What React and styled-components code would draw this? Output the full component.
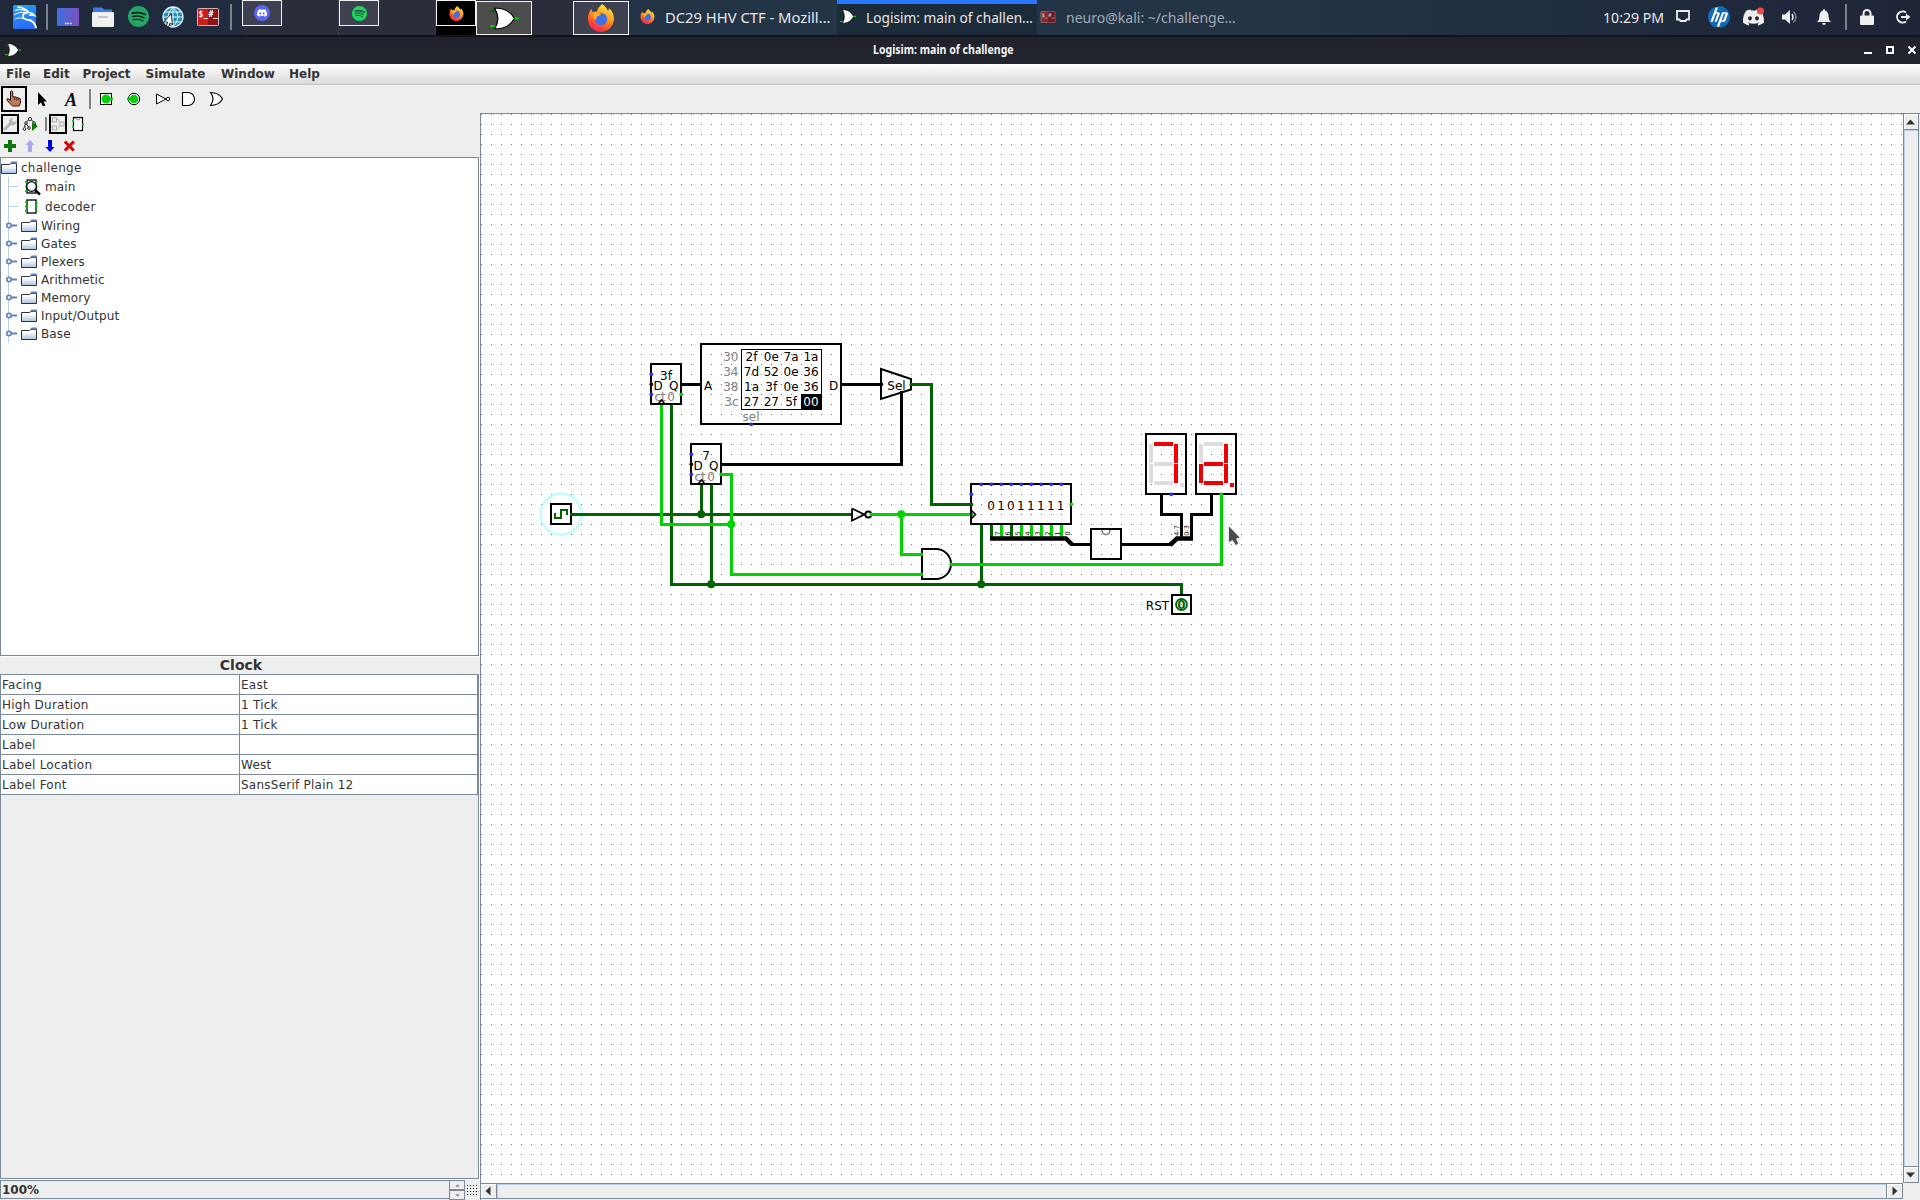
import React, { useLayoutEffect, useRef, useState } from "react";
import styled, { createGlobalStyle } from "styled-components";
import { SiKalilinux, SiSpotify, SiDiscord, SiHp } from "react-icons/si";

const Global = createGlobalStyle`
  * { box-sizing: border-box; }
  html, body { margin: 0; padding: 0; background: #eeeeee; overflow: hidden; }
  body { font-family: "DejaVu Sans", sans-serif; font-size: 12px; color: #333; }
  svg { display: block; flex: none; }
`;

const LINE = "#7a8a99";
const SHADE = "#b8cfe5";
const LOW = "#006400";
const HIGH = "#00d200";

/* ---------- text fitted to a measured width ---------- */
const FitBox = styled.span`
  display: block;
  flex: none;
  white-space: pre;
  overflow: visible;
`;
const FitInner = styled.span`
  display: inline-block;
  white-space: pre;
  transform-origin: 0 50%;
`;
function Fit({ w, children }) {
  const ref = useRef(null);
  const [k, setK] = useState(1);
  useLayoutEffect(() => {
    if (w && ref.current) setK(w / ref.current.offsetWidth);
  }, [w]);
  return (
    <FitBox style={{ width: w }}>
      <FitInner ref={ref} style={{ transform: `scaleX(${k})` }}>{children}</FitInner>
    </FitBox>
  );
}

/* ---------- layout ---------- */
const Screen = styled.div`
  width: 1920px;
  height: 1200px;
  display: flex;
  flex-direction: column;
`;
const Panel = styled.header`
  height: 35px;
  flex: none;
  display: flex;
  align-items: center;
  background: linear-gradient(90deg, #20293b 0, #212c40 240px, #243447 640px, #233447 1300px, #20273a 1800px, #1f2538 100%);
  color: #e6e8ea;
  font-family: "Noto Sans", sans-serif;
  font-size: 14.6px;
`;
const Launchers = styled.div`
  width: 242px;
  height: 35px;
  display: flex;
  align-items: center;
  padding: 0 0 1px 13px;
`;
const Slot = styled.span`
  display: flex;
  flex: none;
  width: ${(p) => p.$w}px;
  margin-right: ${(p) => p.$gap || 0}px;
`;
const Bar = styled.span`
  flex: none;
  width: 2px;
  height: 26px;
  background: #7c828b;
  margin-right: ${(p) => p.$gap || 0}px;
`;
const Pager = styled.div`
  display: flex;
  width: 388px;
  height: 35px;
  background: #2b2d3a;
`;
const Workspace = styled.div`
  display: flex;
  width: 97px;
  padding-left: ${(p) => p.$indent || 0}px;
  border-right: ${(p) => (p.$rule ? "1px solid #3c3f4b" : "none")};
  background: ${(p) => (p.$active ? "linear-gradient(90deg,#000 40px,#2b2d3a 40px)" : "none")};
`;
const MiniWindow = styled.div`
  display: flex;
  align-items: center;
  justify-content: center;
  width: ${(p) => p.$w}px;
  height: ${(p) => p.$h}px;
  margin-top: ${(p) => p.$top || 0}px;
  background: ${(p) => p.$bg || "#3d4150"};
  border: 1px solid #f2f2f2;
`;
const Task = styled.div`
  display: flex;
  align-items: center;
  width: ${(p) => p.$w}px;
  height: 35px;
  padding: 0 0 2px ${(p) => p.$pad}px;
  gap: 10px;
  background: ${(p) => (p.$active ? "#1c2b39" : "transparent")};
  box-shadow: ${(p) => (p.$active ? "inset 0 4px 0 #2777ff" : "none")};
  color: ${(p) => (p.$dim ? "#a3abb3" : "#e6e8ea")};
`;
const Tray = styled.div`
  display: flex;
  align-items: center;
  margin-left: auto;
  width: 317px;
  height: 35px;
  padding-bottom: 2px;
`;
const TitleBar = styled.div`
  height: 29px;
  flex: none;
  display: grid;
  grid-template-columns: 60px 1fr 60px;
  align-items: center;
  padding-bottom: 2px;
  border-top: 2px solid #12141b;
  background: linear-gradient(#20222b, #23252e);
  color: #f4f4f4;
  font: bold 12.5px "Noto Sans", sans-serif;
`;
const TitleText = styled.div`
  display: flex;
  justify-content: center;
  padding-right: 33px;
  height: 18px;
  line-height: 17px;
`;
const MenuBar = styled.nav`
  height: 21px;
  flex: none;
  display: flex;
  align-items: center;
  padding-left: 6px;
  background: linear-gradient(#fff, #dadada);
  border-bottom: 1px solid #c4c4c4;
  font-weight: bold;
`;
const MenuItem = styled.span`
  width: ${(p) => p.$w}px;
  line-height: 18px;
`;
const Tools = styled.div`
  height: 28px;
  flex: none;
  display: flex;
  align-items: center;
  padding: 0 0 1px 1px;
`;
const ToolButton = styled.span`
  display: flex;
  align-items: center;
  justify-content: center;
  flex: none;
  width: ${(p) => p.$w}px;
  height: ${(p) => p.$h}px;
  border: 2px solid ${(p) => (p.$on ? "#000" : "transparent")};
`;
const ToolA = styled.text`
  font: italic bold 18px "Liberation Serif", serif;
  fill: #111;
`;
const Work = styled.main`
  flex: 1;
  min-height: 0;
  display: grid;
  grid-template-columns: 480px 1440px;
`;
const Side = styled.aside`
  display: flex;
  flex-direction: column;
  min-height: 0;
`;
const SmallTools = styled.div`
  display: flex;
  align-items: center;
  flex: none;
  height: ${(p) => p.$h}px;
  padding: ${(p) => p.$pad};
  gap: ${(p) => p.$gap || 0}px;
`;
const Frame = styled.div`
  width: 479px;
  flex: none;
  height: ${(p) => p.$h}px;
  border: 1px solid ${LINE};
  background: ${(p) => p.$bg || "#fff"};
  box-shadow: 1px 1px 0 #fff;
`;
const TreeRow = styled.div`
  display: flex;
  align-items: center;
  height: ${(p) => p.$h}px;
  letter-spacing: ${(p) => p.$track || 0.12}px;
`;
const TreeLabel = styled.span`
  padding-left: ${(p) => p.$pad}px;
`;
const PropTitle = styled.h2`
  margin: 0;
  flex: none;
  height: 18px;
  line-height: 18px;
  text-align: center;
  padding-left: 2px;
  font-size: 14px;
  font-weight: bold;
`;
const PropRow = styled.div`
  display: grid;
  grid-template-columns: 239px 238px;
  height: 20px;
  background: #fff;
  width: 477px;
`;
const PropCell = styled.span`
  border-right: 1px solid ${LINE};
  border-bottom: 1px solid ${LINE};
  padding-left: 1px;
  line-height: 20px;
  height: 20px;
  letter-spacing: 0.24px;
`;
const ZoomRow = styled.div`
  display: flex;
  flex: none;
  height: 20px;
  margin-top: 1px;
`;
const ZoomField = styled.div`
  width: 449px;
  height: 19px;
  border: 1px solid ${LINE};
  border-right: none;
  padding-left: 1px;
  line-height: 19px;
  font-weight: bold;
`;
const Spinner = styled.div`
  display: flex;
  flex-direction: column;
  width: 16px;
  height: 20px;
`;
const SpinButton = styled.span`
  display: flex;
  align-items: center;
  justify-content: center;
  flex: 1;
  border: 1px solid ${LINE};
`;
const GridIconBox = styled.span`
  padding: 5px 0 0 2px;
`;
const CanvasFrame = styled.section`
  display: grid;
  grid-template-columns: 1422px 16px;
  grid-template-rows: 1069px 16px;
  border-left: 1px solid ${LINE};
  border-top: 1px solid ${LINE};
`;
const Track = styled.div`
  display: flex;
  flex-direction: ${(p) => (p.$v ? "column" : "row")};
  width: ${(p) => (p.$v ? "16px" : "auto")};
  height: ${(p) => (p.$v ? "auto" : "16px")};
  border: 1px solid ${LINE};
  ${(p) => (p.$v ? "border-top: none;" : "border-left: none;")}
`;
const ArrowButton = styled.span`
  display: flex;
  align-items: center;
  justify-content: center;
  width: ${(p) => (p.$v ? "14px" : "15px")};
  height: ${(p) => (p.$v ? "15px" : "14px")};
  flex: none;
  box-shadow: inset 1px 1px 0 #fff;
`;
const Thumb = styled.span`
  flex: 1;
  border: 0 solid ${LINE};
  border-width: ${(p) => (p.$v ? "1px 0" : "0 1px")};
  box-shadow: inset 1px 1px 0 ${SHADE};
`;

/* ---------- icons ---------- */
const GateIcon = ({ w, h }) => (
  <svg width={w} height={h} viewBox="0 0 16 16" preserveAspectRatio="none">
    <path d="M0 2.700h3.500" stroke={LOW} strokeWidth="1.300" />
    <path d="M0 13.300h3.500" stroke={HIGH} strokeWidth="1.300" />
    <path d="M2.500 .8H4.500Q10.500 1.500 13.500 8Q10.500 14.500 4.500 15.200H2.500Q6.200 8 2.500 .8Z" fill="#fff" stroke="#000" strokeWidth=".7" />
    <path d="M13.500 8h2.500" stroke={HIGH} strokeWidth="1.500" />
  </svg>
);
const Firefox = ({ s }) => (
  <svg width={s} height={s} viewBox="0 0 24 24">
    <defs>
      <linearGradient id="fx" x1=".8" y1="0" x2=".3" y2="1">
        <stop offset="0" stopColor="#fff04a" />
        <stop offset=".45" stopColor="#ff9a1f" />
        <stop offset=".8" stopColor="#ff4430" />
        <stop offset="1" stopColor="#e8246e" />
      </linearGradient>
    </defs>
    <path fill="url(#fx)" d="M13 0c3 2 4 4 5 6c1-1 .6-2 .6-2.500C22 6 23.500 10 23 14c-1 6-5.500 10-11 10S1 19.500.8 13C.7 9 2 6 4 4c0 1 .3 2 1 3c1-.6 2.500-.8 3.500-.3C8.800 4 11 2 13 0Z" />
    <circle cx="12" cy="13" r="5.300" fill="#3f6fe8" />
    <path fill="#ffb02a" d="M5 8c3-1.500 5-.5 7 1c-1 1-2 1-3 1.500c-1 .8-1.500 2-1 3.500c-2-1-3-3-3-6Z" />
  </svg>
);
const Folder = () => (
  <svg width="16" height="14" viewBox="0 0 16 14">
    <defs>
      <linearGradient id="fold" x1="0" y1="0" x2="0" y2="1">
        <stop offset=".25" stopColor="#fff" />
        <stop offset="1" stopColor="#a9c4de" />
      </linearGradient>
    </defs>
    <path d="M.5 12.500V3.500H8.500L10 2.500H15.500V12.500Z" fill="url(#fold)" stroke="#333" />
    <path d="M9 2.200L10.500 .5H16V2.500H9Z" fill="#6382bf" />
  </svg>
);
const Handle = () => (
  <svg width="20" height="18" viewBox="0 0 20 18">
    <path d="M7.500 0v18" stroke={SHADE} />
    <circle cx="8" cy="8.500" r="2.200" fill="#fff" stroke="#6382bf" strokeWidth="1.700" />
    <path d="M10 8.500h6" stroke="#6382bf" strokeWidth="2" />
  </svg>
);
const Branch = () => (
  <svg width="24" height="20" viewBox="0 0 24 20" shapeRendering="crispEdges">
    <path d="M7.500 0v20M8 9.500h9" stroke={SHADE} fill="none" />
  </svg>
);
const Chip = ({ lens }) => (
  <svg width="17" height="18" viewBox="0 0 17 18">
    <rect x="2" y="2" width="9" height="13" fill="#fff" stroke="#000" strokeWidth="1.300" />
    <path d="M0 4h2M0 8.500h2M0 13h2M10.500 4h2M10.500 8.500h2M10.500 13h2" stroke={HIGH} strokeWidth="1.800" />
    {lens && <circle cx="6.500" cy="8.500" r="4.800" fill="#f0f0ff" fillOpacity=".95" stroke="#000" strokeWidth="1.200" />}
    {lens && <path d="M10 12l5 4.500" stroke="#000" strokeWidth="2.400" />}
  </svg>
);
const HandIcon = () => (
  <svg width="16" height="17" viewBox="0 0 16 17">
    <path d="M4.500 1.500q1.200-1.200 2.200 0v5l2 .3l2 .6l2 .6q2 .2 2 2.500q0 3-1.500 5.500H6.500Q3 13 1 10q-.3-1.500 1-1.500l2.500 2Z" fill="#c27a5c" stroke="#301810" />
    <path d="M8.700 7v3M10.800 7.500v3M12.800 8.500v2" stroke="#301810" strokeWidth=".8" />
  </svg>
);
const Launch = {
  Kali: () => (
    <svg width="24" height="24" viewBox="0 0 24 24">
      <defs><linearGradient id="kl" x1="0" y1="0" x2=".3" y2="1"><stop stopColor="#20a4f3" /><stop offset="1" stopColor="#2a6df5" /></linearGradient></defs>
      <rect width="23" height="24" rx="1.500" fill="url(#kl)" />
      <g fill="none" stroke="#fff" strokeLinecap="round">
        <path d="M2.500 5.500Q8 3 14 6.500" strokeWidth="1.300" />
        <path d="M1.500 9.500Q7 6 13.500 7.500" strokeWidth="1" />
        <path d="M5 2Q12 2.500 16 7.500Q19.500 8 21.500 10.500Q19 9.800 16.500 10.200" strokeWidth="1.600" />
        <path d="M14.500 7.500Q9 8.500 10 12Q11 14.500 16 15Q21 15.800 23 22.500" strokeWidth="1.900" />
        <path d="M10.500 13.500Q5.500 11.500 2 14" strokeWidth=".9" />
      </g>
    </svg>
  ),
  Desktop: () => (
    <svg width="22" height="18" viewBox="0 0 22 18">
      <defs><linearGradient id="dk"><stop stopColor="#3d6fe0" /><stop offset="1" stopColor="#7a52bd" /></linearGradient></defs>
      <rect width="22" height="18" rx="1" fill="url(#dk)" />
      <path d="M8 15.500h1.500M10.500 15.500h1.500M13 15.500h1.500" stroke="#fff" strokeWidth="1.400" />
    </svg>
  ),
  Files: () => (
    <svg width="22" height="20" viewBox="0 0 22 20">
      <path d="M2 .5h8l2 2h8v5H1V1.500q0-1 1-1Z" fill="#3c7be8" />
      <rect y="5" width="22" height="15" rx="1" fill="#f1f1f1" />
      <rect x="6" y="9" width="10" height="2" rx="1" fill="#c4c4c4" />
    </svg>
  ),
  Globe: () => (
    <svg width="22" height="22" viewBox="0 0 22 22">
      <circle cx="11" cy="11" r="10" fill="#2190b8" stroke="#dff1f7" strokeWidth="1.300" />
      <path d="M1 11h20M3 6h16M3 16h16M11 1v20M11 1q-10 10 0 20M11 1q10 10 0 20" stroke="#e9f6fa" fill="none" />
      <path d="M9 8L2 16l3.500 0l-1 4l2 .8l1.500-3.800l2.500 1.500Z" fill="#fff" stroke="#111" strokeWidth=".8" />
    </svg>
  ),
};
const TermText = styled.text`
  font: bold 8px "DejaVu Sans Mono", monospace;
  fill: #fff;
`;
const Terminal = ({ w, h, dim }) => (
  <svg width={w} height={h} viewBox="0 0 22 18" opacity={dim ? 0.65 : 1}>
    <rect x=".5" y=".5" width="21" height="17" rx="1" fill="#cf1b1b" stroke="#d9b3b3" />
    <rect x="11" y="1" width="10" height="16" fill="#8e1212" />
    <TermText x="1.500" y="9">$_</TermText>
    <TermText x="11.500" y="9">#_</TermText>
  </svg>
);

/* ---------- circuit ---------- */
const CText = styled.text`
  font-family: "DejaVu Sans", sans-serif;
  font-size: ${(p) => p.$s || 12}px;
  fill: ${(p) => p.$c || "#000"};
  text-anchor: ${(p) => p.$a || "middle"};
`;
const Wire = ({ d, c = "#000", w = 3 }) => (
  <path d={d} transform="translate(.5 .5)" stroke={c} strokeWidth={w} fill="none" strokeLinecap="square" shapeRendering="crispEdges" />
);
const Box = (p) => <rect {...p} fill="none" stroke="#000" strokeWidth="2" shapeRendering="crispEdges" />;
const Pin = ({ x, y, c = "#2a2aff" }) => <circle cx={x + 0.3} cy={y + 0.3} r="1.900" fill={c} />;
const Joint = ({ x, y, c }) => <circle cx={x + 0.2} cy={y + 0.2} r="4" fill={c} />;

function Register({ x, y, value }) {
  return (
    <g>
      <Box x={x} y={y} width="30" height="40" />
      <CText x={x + 15} y={y + 15.500}>{value}</CText>
      <CText x={x + 2.500} y={y + 26} $a="start">D</CText>
      <CText x={x + 27.500} y={y + 26} $a="end">Q</CText>
      <CText x={x + 3.500} y={y + 36.500} $a="start" $c="#808080">ct</CText>
      <CText x={x + 20} y={y + 36.500} $c="#808080">0</CText>
      <path d={`M${x + 7} ${y + 40}l3.500-4l3.500 4`} fill="none" stroke="#000" strokeWidth="1.600" />
      <Pin x={x} y={y + 10} />
      <Pin x={x} y={y + 30} />
      <Pin x={x} y={y + 20} c="#000" />
      <Pin x={x + 30} y={y + 30} c={HIGH} />
    </g>
  );
}

const SEGMENTS = [
  [8, 8, 19, 4], [28, 10, 4, 19], [28, 30, 4, 19], [8, 47, 19, 4],
  [3, 30, 4, 19], [3, 10, 4, 19], [8, 28, 19, 4], [34, 49, 4, 4],
];
function SevenSegment({ x, y, on }) {
  return (
    <g shapeRendering="crispEdges">
      {SEGMENTS.map(([dx, dy, w, h], i) => (
        <rect key={i} x={x + dx} y={y + dy} width={w} height={h} fill={on.includes(i) ? "#f00000" : "#dddddd"} />
      ))}
      <Box x={x} y={y} width="40" height="60" />
    </g>
  );
}

const ROM = [
  ["30", ["2f", "0e", "7a", "1a"]],
  ["34", ["7d", "52", "0e", "36"]],
  ["38", ["1a", "3f", "0e", "36"]],
  ["3c", ["27", "27", "5f", "00"]],
];
const BITS = [0, 1, 0, 1, 1, 1, 1, 1];

function Circuit() {
  return (
    <svg width="1422" height="1069" viewBox="481 114 1422 1069">
      <defs>
        <pattern id="grid" x="481" y="114" width="10" height="10" patternUnits="userSpaceOnUse">
          <rect width="1" height="1" fill="#777" shapeRendering="crispEdges" />
        </pattern>
      </defs>
      <rect x="481" y="114" width="1422" height="1069" fill="#fff" />
      <rect x="481" y="114" width="1422" height="1069" fill="url(#grid)" />

      <Wire d="M682 384H700M842 384H880M722 464H901V392" />
      <Wire d="M1161 496V514H1181V538M1211 496V514H1191V538M1122 544H1170M1072 544H1090" />
      <Wire c={LOW} d="M911 384H931V504H971M571 514H851M701 485V514M711 485V584M671 405V584H1181V593M981 525V584" />
      <Wire c={HIGH} d="M871 514H971M901 514V554H921M721 474H731V574H921M661 405V524H731M952 564H1221V495" />
      {BITS.map((b, i) => (
        <Wire key={i} c={b ? HIGH : LOW} d={`M${991 + i * 10} 526V535`} />
      ))}
      <Joint x={701} y={514} c={LOW} />
      <Joint x={711} y={584} c={LOW} />
      <Joint x={981} y={584} c={LOW} />
      <Joint x={731} y={524} c={HIGH} />
      <Joint x={901} y={514} c={HIGH} />

      <circle cx="561" cy="514.300" r="20.500" fill="none" stroke="#c0ffff" strokeWidth="2.400" />
      <Box x="551" y="504" width="20" height="20" />
      <path d="M555 513v5h6v-8h6v5" fill="none" stroke={LOW} strokeWidth="2" shapeRendering="crispEdges" />
      <Wire c={LOW} d="M571 514H585" />

      <Register x={651} y={364} value="3f" />
      <Register x={691} y={444} value="7" />

      <Box x="701" y="344" width="140" height="80" />
      <rect x="741.500" y="349.500" width="80" height="60" fill="none" stroke="#000" shapeRendering="crispEdges" />
      <rect x="801" y="394" width="21" height="16" />
      {ROM.map(([addr, cells], r) => (
        <g key={addr}>
          <CText x="738.500" y={361 + r * 15.100} $a="end" $c="#808080">{addr}</CText>
          {cells.map((v, c) => (
            <CText key={c} x={751.500 + c * 19.800} y={361 + r * 15.100} $c={r === 3 && c === 3 ? "#fff" : "#000"}>{v}</CText>
          ))}
        </g>
      ))}
      <CText x="751" y="420.500" $c="#808080">sel</CText>
      <CText x="708" y="389.500">A</CText>
      <CText x="833.500" y="389.500">D</CText>
      <Pin x={751} y={424} />

      <path d="M881 369L911 379V389.500L881 399Z" fill="none" stroke="#000" strokeWidth="2" />
      <CText x="896.500" y="390">Sel</CText>
      <Pin x={881} y={384} c="#000" />
      <Pin x={911} y={384} c={LOW} />

      <path d="M852 508.500V520.500L866 513.800M852 508.500L866 515.200" fill="none" stroke="#000" strokeWidth="1.800" />
      <circle cx="868.300" cy="514.500" r="3" fill="none" stroke="#000" strokeWidth="1.800" />
      <Pin x={871} y={514} c={HIGH} />

      <path d="M922 549V579H936A15 15 0 0 0 936 549Z" fill="none" stroke="#000" strokeWidth="2" />
      <Pin x={921} y={554} c={HIGH} />
      <Pin x={921} y={574} c={HIGH} />
      <Pin x={951} y={564} c={HIGH} />

      <Box x="971" y="484" width="100" height="40" />
      {BITS.map((b, i) => (
        <g key={i}>
          <CText x={991 + i * 9.950} y="509.500">{b}</CText>
          <Pin x={991 + i * 10} y={484} />
          <CText $s="6.5" transform={`translate(${999.500 + i * 10} 533.500) rotate(-90)`}>{7 - i}</CText>
        </g>
      ))}
      <Pin x={981} y={484} />
      <Pin x={971} y={494} />
      <Pin x={971} y={504} c={LOW} />
      <Pin x={1071} y={504} c={HIGH} />
      <path d="M971 510l4.500 4.500l-4.500 4.500" fill="none" stroke="#000" strokeWidth="1.600" />
      <path d="M990 538.500H1066L1072 544.500" fill="none" stroke="#000" strokeWidth="4.500" />

      <Box x="1091" y="529" width="30" height="30" />
      <path d="M1102 530a4 4.500 0 0 0 8 0" fill="none" stroke="#808080" strokeWidth="1.600" />

      <SevenSegment x={1146} y={434} on={[0, 1, 2]} />
      <SevenSegment x={1196} y={434} on={[1, 2, 3, 4, 6, 7]} />
      <Pin x={1171} y={494} />
      <Pin x={1221} y={494} c={HIGH} />
      <path d="M1170 545L1177 538.500H1193" fill="none" stroke="#000" strokeWidth="4.500" />
      <CText $s="6.5" transform="translate(1179 530.500) rotate(-90)">4-7</CText>
      <CText $s="6.5" transform="translate(1189 530.500) rotate(-90)">0-3</CText>

      <CText x="1157.500" y="610">RST</CText>
      <Box x="1172" y="595" width="19" height="19" />
      <circle cx="1181.500" cy="604.500" r="5.500" fill="none" stroke={LOW} strokeWidth="1.800" />
      <CText x="1181.500" y="609" fontWeight="bold" $c={LOW}>0</CText>

      <path d="M1229 526.500V542L1232.500 540L1236 545L1238 543.500L1236 538.500L1239.500 537.500Z" fill="#4d4d4d" stroke="#ededed" strokeWidth="3" paintOrder="stroke" />
    </svg>
  );
}

const MENUS = [["File", 37], ["Edit", 39.5], ["Project", 63], ["Simulate", 75.5], ["Window", 68], ["Help", 60]];
const FOLDERS = ["Wiring", "Gates", "Plexers", "Arithmetic", "Memory", "Input/Output", "Base"];
const PROPS = [
  ["Facing", "East"], ["High Duration", "1 Tick"], ["Low Duration", "1 Tick"],
  ["Label", ""], ["Label Location", "West"], ["Label Font", "SansSerif Plain 12"],
];
const Arrow = ({ r, s = 10, c = "#333", dx = 0 }) => (
  <svg width={s} height={s} viewBox={`${-dx} 0 10 10`}><path d="M5 2.500L9.500 7.500H.5Z" fill={c} transform={`rotate(${r} 5 5)`} /></svg>
);

export default function App() {
  return (
    <Screen>
      <Global />
      <Panel>
        <Launchers>
          <Slot $w={24} $gap={9}><Launch.Kali /></Slot>
          <Bar $gap={9} />
          <Slot $w={22} $gap={13}><Launch.Desktop /></Slot>
          <Slot $w={22} $gap={14}><Launch.Files /></Slot>
          <Slot $w={22} $gap={12}>
            <svg width="22" height="22" viewBox="0 0 22 22"><circle cx="11" cy="11" r="9" fill="#14261d" /><SiSpotify size={21} color="#27a567" /></svg>
          </Slot>
          <Slot $w={22} $gap={13}><Launch.Globe /></Slot>
          <Slot $w={22} $gap={11}><Terminal w={22} h={18} /></Slot>
          <Bar />
        </Launchers>
        <Pager>
          <Workspace $rule>
            <MiniWindow $w={40} $h={26}>
              <svg width="16" height="16" viewBox="0 0 16 16"><circle cx="8" cy="8" r="8" fill="#5865f2" /><SiDiscord x="3" y="3" size={10} color="#fff" /></svg>
            </MiniWindow>
          </Workspace>
          <Workspace $rule>
            <MiniWindow $w={40} $h={26}><SiSpotify size={15} color="#1ed760" /></MiniWindow>
          </Workspace>
          <Workspace $active>
            <MiniWindow $w={40} $h={26} $bg="#000"><Firefox s={15} /></MiniWindow>
            <MiniWindow $w={56} $h={34} $top={1} $bg="#4d4d4d"><GateIcon w={29} h={23} /></MiniWindow>
          </Workspace>
          <Workspace $indent={40}>
            <MiniWindow $w={56} $h={34} $top={1}><Firefox s={28} /></MiniWindow>
          </Workspace>
        </Pager>
        <Task $w={207} $pad={10}><Firefox s={15} /><Fit w={165}>DC29 HHV CTF - Mozill…</Fit></Task>
        <Task $w={200} $pad={3} $active><GateIcon w={16} h={15} /><Fit w={167}>Logisim: main of challen…</Fit></Task>
        <Task $w={210} $pad={3} $dim><Terminal w={16} h={12} dim /><Fit w={170}>neuro@kali: ~/challenge…</Fit></Task>
        <Tray>
          <Slot $w={61} $gap={12}><Fit w={61}>10:29 PM</Fit></Slot>
          <Slot $w={14} $gap={18}>
            <svg width="14" height="13" viewBox="0 0 14 13"><path d="M1 1h12v8.500h-2.500l-1 1.500H4.500l-1-1.500H1Z" fill="none" stroke="#eee" strokeWidth="1.800" /></svg>
          </Slot>
          <Slot $w={22} $gap={13}>
            <svg width="22" height="22" viewBox="0 0 22 22"><circle cx="11" cy="11" r="10" fill="#fff" /><SiHp size={22} color="#0f6cb5" /></svg>
          </Slot>
          <Slot $w={22} $gap={17}>
            <svg width="22" height="20" viewBox="0 0 22 20"><SiDiscord size={21} color="#eee" /><circle cx="17.500" cy="4" r="3.600" fill="#f04747" /></svg>
          </Slot>
          <Slot $w={16} $gap={19}>
            <svg width="16" height="14" viewBox="0 0 16 14"><path d="M0 4.500h3L8 0V14L3 9.500H0Z" fill="#eee" /><path d="M10 4q2 3 0 6" stroke="#eee" strokeWidth="1.500" fill="none" /><path d="M11.500 1.500q5 5.500 0 11" stroke="#777e8a" strokeWidth="1.500" fill="none" /></svg>
          </Slot>
          <Slot $w={14} $gap={14}>
            <svg width="14" height="16" viewBox="0 0 14 16"><path d="M7 0Q8 0 8 1.500Q11.500 2.500 11.500 7Q11.500 11 14 13H0Q2.500 11 2.500 7Q2.500 2.500 6 1.500Q6 0 7 0ZM5 14h4q-.5 2-2 2t-2-2Z" fill="#eee" /></svg>
          </Slot>
          <Bar $gap={13} />
          <Slot $w={14} $gap={21}>
            <svg width="14" height="16" viewBox="0 0 14 16"><rect y="6.500" width="14" height="9.500" rx="1" fill="#eee" /><path d="M3.500 7V4.500a3.500 3.500 0 0 1 7 0V7" fill="none" stroke="#eee" strokeWidth="2" /></svg>
          </Slot>
          <Slot $w={16}>
            <svg width="16" height="14" viewBox="0 0 16 14"><path d="M11 2.500A5.600 5.600 0 1 0 11 11.500" fill="none" stroke="#eee" strokeWidth="1.900" /><path d="M6 7h6" stroke="#eee" strokeWidth="2" /><path d="M11 3.500L15.500 7L11 10.500Z" fill="#eee" /></svg>
          </Slot>
        </Tray>
      </Panel>
      <TitleBar>
        <svg width="26" height="14" viewBox="-5 0 26 14"><GateIcon w={16} h={14} /></svg>
        <TitleText><Fit w={141}>Logisim: main of challenge</Fit></TitleText>
        <svg width="60" height="10" viewBox="0 0 60 10">
          <path d="M4 8h8" stroke="#fff" strokeWidth="2" />
          <rect x="27" y="2" width="6" height="6" fill="none" stroke="#fff" strokeWidth="2" />
          <path d="M48.500 1.500l7 7M55.500 1.500l-7 7" stroke="#fff" strokeWidth="2" />
        </svg>
      </TitleBar>
      <MenuBar>
        {MENUS.map(([t, w]) => <MenuItem key={t} $w={w}>{t}</MenuItem>)}
      </MenuBar>
      <Tools>
        <ToolButton $w={26} $h={26} $on><HandIcon /></ToolButton>
        <svg width="196" height="22" viewBox="27 88 196 22">
          <path d="M38 92v13l3-2.500l2 4l2.500-1l-2-4h3.500Z" fill="#000" stroke="#fff" strokeWidth="1.500" paintOrder="stroke" />
          <ToolA x="65" y="106">A</ToolA>
          <rect x="89" y="89" width="2" height="20" fill="#808080" />
          <rect x="100.500" y="93.500" width="11" height="11" fill="#fff" stroke="#000" />
          <circle cx="106" cy="99" r="4.500" fill={HIGH} /><path d="M108 99h5" stroke={HIGH} strokeWidth="2.500" />
          <circle cx="134" cy="99" r="5.700" fill="#fff" stroke="#000" />
          <circle cx="134" cy="99" r="4.200" fill={HIGH} /><path d="M127 99h5" stroke={HIGH} strokeWidth="2.500" />
          <path d="M156.500 94v10L166 99Z" fill="#fff" stroke="#000" /><circle cx="168" cy="99" r="1.700" fill="#fff" stroke="#000" />
          <path d="M182.500 92.500V105.500H188A6.500 6.500 0 0 0 188 92.500Z" fill="#fff" stroke="#000" strokeWidth="1.100" />
          <path d="M210.500 92.500Q219 92.500 222.500 99Q219 105.500 210.500 105.500Q215.500 99 210.500 92.500Z" fill="#fff" stroke="#000" strokeWidth="1.100" />
        </svg>
      </Tools>
      <Work>
        <Side>
          <SmallTools $h={22} $pad="0 0 0 1px">
            <ToolButton $w={18} $h={20} $on>
              <svg width="14" height="14" viewBox="0 0 14 14"><path d="M2 12L8.500 5.500" stroke="#b4b4b4" strokeWidth="3" strokeLinecap="round" /><path d="M13.300 3.200A3.800 3.800 0 1 1 10 .8L8.800 3l1.200 1.800h1.800Z" fill="#b4b4b4" /></svg>
            </ToolButton>
            <svg width="30" height="16" viewBox="19 116 30 16">
              <path d="M29 119.500L25.500 123L24.500 127.500M31 119.500L34.500 123L36.500 126M26.500 124L28.500 127" fill="none" stroke="#000" strokeWidth=".9" />
              <g fill="#fff" stroke="#000" strokeWidth=".8"><circle cx="30" cy="119" r="1.600" /><circle cx="26" cy="123" r="1.300" /><circle cx="34" cy="123" r="1.300" /><circle cx="24.500" cy="129" r="1.400" /><circle cx="29" cy="128" r="1.300" /></g>
              <path d="M32 122L37.500 126.500L32 131Z" fill="#0a7a0a" />
              <rect x="45" y="117" width="2" height="14" fill="#808080" />
            </svg>
            <ToolButton $w={18} $h={20} $on>
              <svg width="14" height="14" viewBox="0 0 14 14"><g fill="none" stroke="#a9a9a9"><rect x="1.500" y=".8" width="4" height="4" /><rect x="1.500" y="9" width="4" height="4" /><rect x="9" y="5" width="4" height="4" /></g><path d="M6 2.500h2V6M6 11h2V8M0 3h1M0 11h1M13 7h1" stroke="#9bdc9b" fill="none" /></svg>
            </ToolButton>
            <svg width="20" height="16" viewBox="67 116 20 16">
              <rect x="73.500" y="117.500" width="9" height="13" fill="#fff" stroke="#000" strokeWidth="1.200" />
              <path d="M76 118a2 2 0 0 0 4 0" fill="none" stroke="#888" />
              <path d="M72 121h2M72 127h2M82 124.500h2" stroke={HIGH} strokeWidth="2" />
            </svg>
          </SmallTools>
          <SmallTools $h={22} $pad="0 0 0 4px" $gap={8}>
            <svg width="12" height="12" viewBox="0 0 12 12"><path d="M6 0v12M0 6h12" stroke="#0a780a" strokeWidth="4" /></svg>
            <svg width="12" height="12" viewBox="0 0 12 12"><path d="M6 0L10.500 5H8v7H4V5H1.500Z" fill="#a9a9e8" /></svg>
            <svg width="12" height="12" viewBox="0 0 12 12"><path d="M6 12L10.500 7H8V0H4v7H1.500Z" fill="#0000e0" /></svg>
            <svg width="12" height="12" viewBox="0 0 12 12"><path d="M.8 1.500l9 9M9.800 1.500l-9 9" stroke="#d80000" strokeWidth="3" /></svg>
          </SmallTools>
          <Frame $h={499}>
            <TreeRow $h={19} $track={0.26}><Folder /><TreeLabel $pad={4}>challenge</TreeLabel></TreeRow>
            <TreeRow $h={20}><Branch /><Chip lens /><TreeLabel $pad={3}>main</TreeLabel></TreeRow>
            <TreeRow $h={20} $track={0.26}><Branch /><Chip /><TreeLabel $pad={3}>decoder</TreeLabel></TreeRow>
            {FOLDERS.map((f) => (
              <TreeRow key={f} $h={18}><Handle /><Folder /><TreeLabel $pad={4}>{f}</TreeLabel></TreeRow>
            ))}
          </Frame>
          <PropTitle>Clock</PropTitle>
          <Frame $h={505} $bg="#eeeeee">
            {PROPS.map(([k, v]) => (
              <PropRow key={k}><PropCell>{k}</PropCell><PropCell>{v}</PropCell></PropRow>
            ))}
          </Frame>
          <ZoomRow>
            <ZoomField>100%</ZoomField>
            <Spinner>
              <SpinButton><Arrow r={0} s={5} c={LINE} /></SpinButton>
              <SpinButton><Arrow r={180} s={5} c={LINE} /></SpinButton>
            </Spinner>
            <GridIconBox>
              <svg width="11" height="11" viewBox="0 0 11 11" shapeRendering="crispEdges">
                <path d="M0 .5h11M0 3.500h11M0 6.500h11M0 9.500h11" stroke="#000" strokeDasharray="1 2" />
              </svg>
            </GridIconBox>
          </ZoomRow>
        </Side>
        <CanvasFrame>
          <Circuit />
          <Track $v>
            <ArrowButton $v><Arrow r={0} dx={-0.5} /></ArrowButton>
            <Thumb $v />
            <ArrowButton $v><Arrow r={180} dx={-0.5} /></ArrowButton>
          </Track>
          <Track>
            <ArrowButton><Arrow r={-90} dx={-1} /></ArrowButton>
            <Thumb />
            <ArrowButton><Arrow r={90} /></ArrowButton>
          </Track>
        </CanvasFrame>
      </Work>
    </Screen>
  );
}
